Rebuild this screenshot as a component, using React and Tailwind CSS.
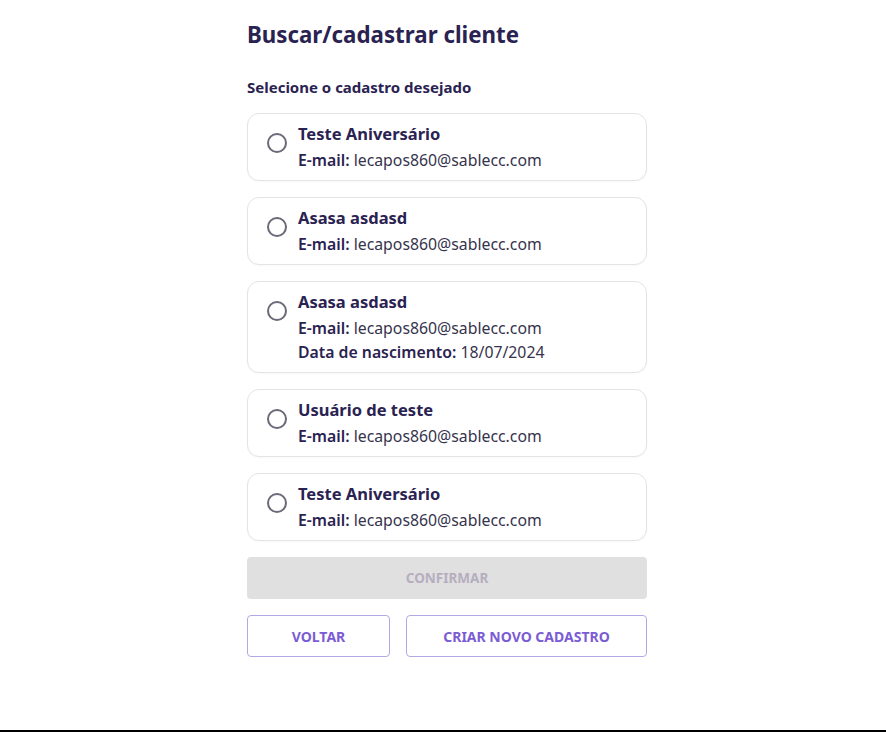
import React from "react";

const clients = [
  { name: "Teste Aniversário", email: "lecapos860@sablecc.com" },
  { name: "Asasa asdasd", email: "lecapos860@sablecc.com" },
  { name: "Asasa asdasd", email: "lecapos860@sablecc.com", birth: "18/07/2024" },
  { name: "Usuário de teste", email: "lecapos860@sablecc.com" },
  { name: "Teste Aniversário", email: "lecapos860@sablecc.com" },
];

function Card({ c }) {
  return (
    <label className="flex items-start rounded-[12px] border border-[#e4e4e6] bg-white pl-[19px] pr-4 pt-2 pb-2 cursor-pointer shadow-[0_1px_2px_rgba(0,0,0,0.03)]">
      <span className="mt-[11px] h-5 w-5 shrink-0 rounded-full border-2 border-[#6d6878]" />
      <span className="ml-[11px] flex flex-col">
        <span className="h-6 leading-6 text-[16.5px] font-bold text-[#2a2352]">{c.name}</span>
        <span className="mt-[2px] h-6 leading-6 text-[15.8px] text-[#36334d]">
          <span className="font-semibold text-[#2a2352]">E-mail:</span> {c.email}
        </span>
        {c.birth && (
          <span className="h-6 leading-6 text-[15.8px] text-[#36334d]">
            <span className="font-semibold text-[#2a2352]">Data de nascimento:</span> {c.birth}
          </span>
        )}
      </span>
    </label>
  );
}

export default function App() {
  return (
    <div
      className="flex h-[732px] flex-col bg-white"
      style={{ fontFamily: "'Noto Sans', sans-serif" }}
    >
      <div className="flex flex-1">
        <div className="ml-[247px] flex w-[400px] flex-col pt-[17px]">
          <h1 className="h-9 leading-9 text-[22.3px] font-bold text-[#2a2352]">
            Buscar/cadastrar cliente
          </h1>
          <p className="mt-[22px] h-6 leading-6 text-[15px] font-bold text-[#2a2352]">
            Selecione o cadastro desejado
          </p>
          <div className="mt-[14px] flex flex-col gap-4">
            {clients.map((c, i) => (
              <Card key={i} c={c} />
            ))}
          </div>
          <button
            disabled
            className="mt-4 h-[42px] w-full rounded-[4px] bg-[#e0e0e0] text-[13.5px] font-bold text-[#b6aebf]"
          >
            CONFIRMAR
          </button>
          <div className="mt-4 flex gap-4">
            <button className="h-[42px] w-[143px] rounded-[4px] border border-[#b4a7e8] bg-white text-[14px] font-bold text-[#7b5cd4]">
              VOLTAR
            </button>
            <button className="h-[42px] flex-1 rounded-[4px] border border-[#b4a7e8] bg-white text-[14px] font-bold text-[#7b5cd4]">
              CRIAR NOVO CADASTRO
            </button>
          </div>
        </div>
      </div>
      <div className="h-[2px] w-full bg-black" />
    </div>
  );
}
